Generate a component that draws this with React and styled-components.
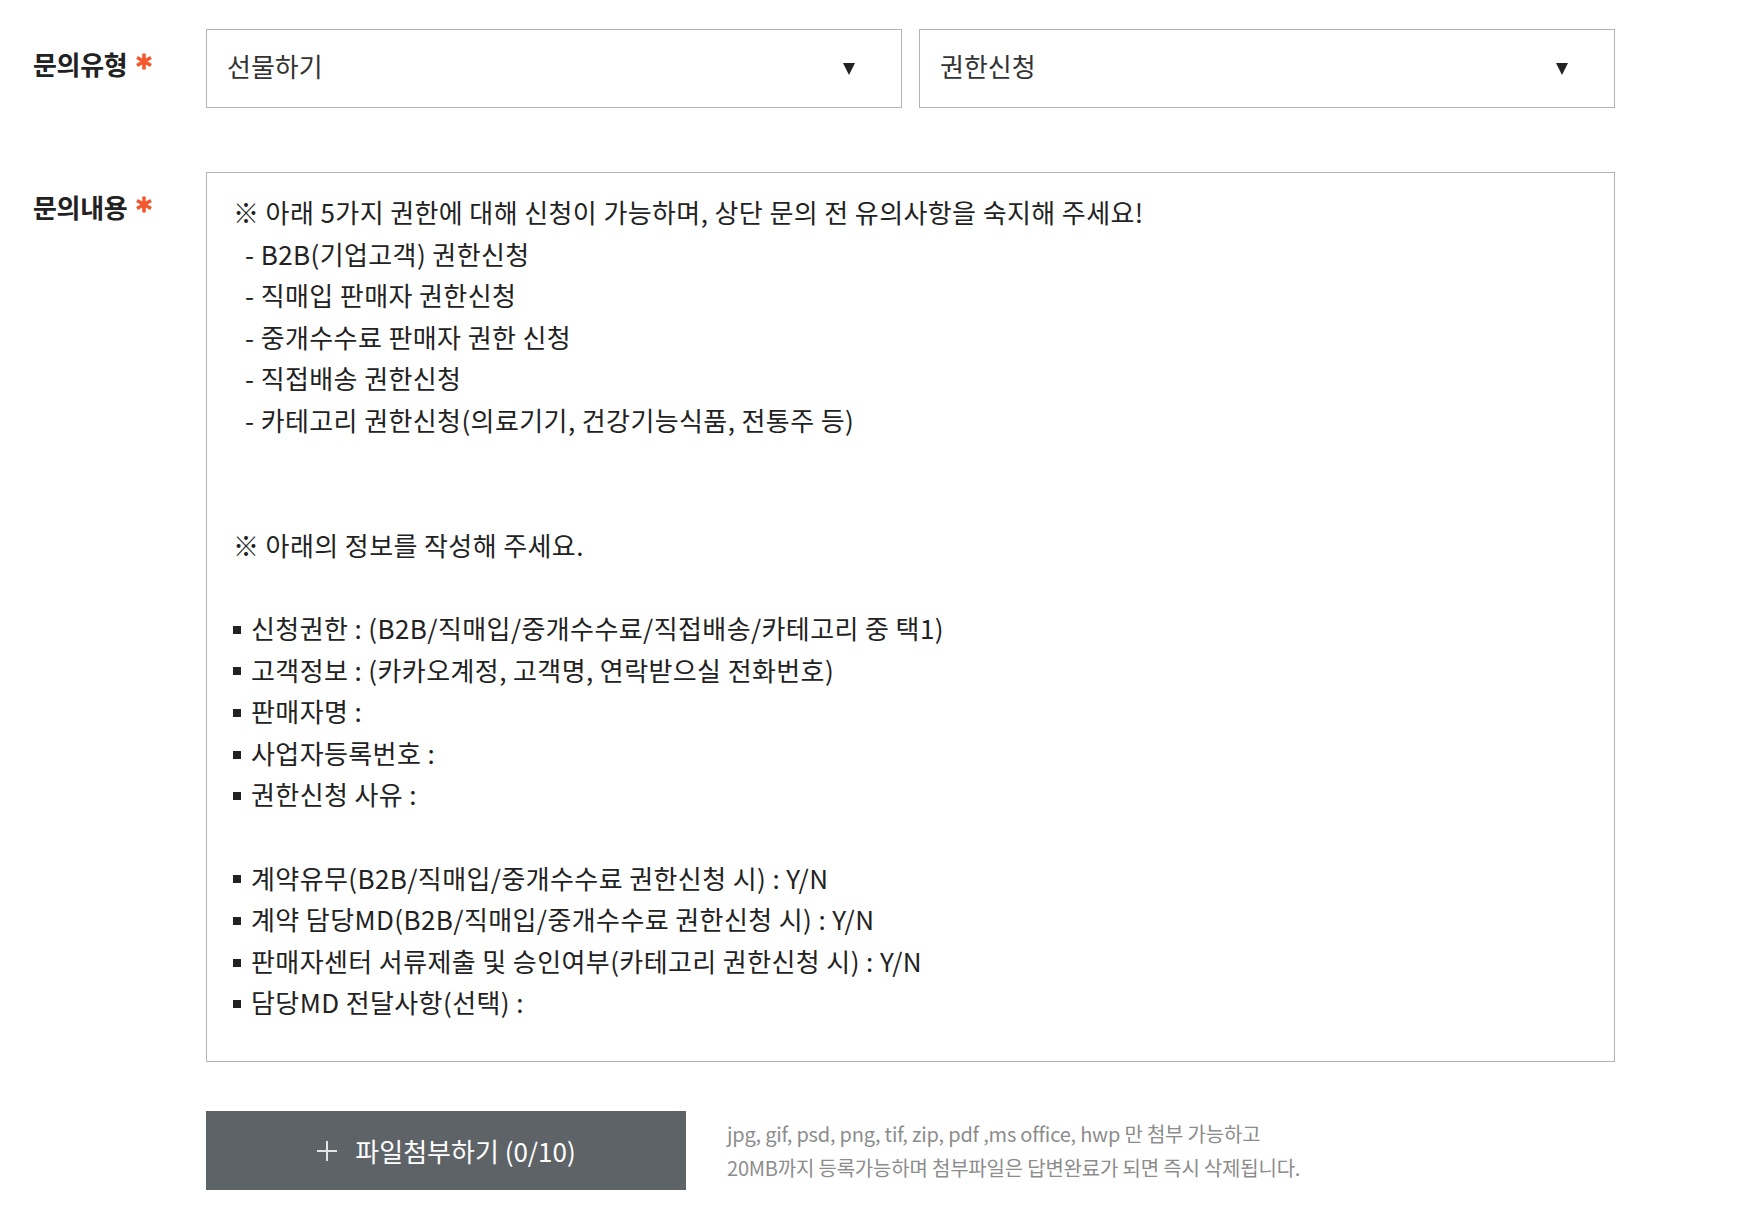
import React from "react";
import styled, { createGlobalStyle } from "styled-components";

const GlobalStyle = createGlobalStyle`
  html, body {
    margin: 0;
    padding: 0;
    background: #fff;
  }
  body {
    font-family: "Noto Sans CJK KR", "Noto Sans", sans-serif;
    color: #222;
  }
`;

const Form = styled.div`
  padding: 29px 0 0 33px;
  display: flex;
  flex-direction: column;
`;

const Row = styled.div`
  display: flex;
  align-items: flex-start;
  margin-bottom: ${(p) => p.gap || 0}px;
`;

const Label = styled.div`
  width: 173px;
  flex-shrink: 0;
  padding-top: 20px;
  display: flex;
  align-items: center;
  font-size: 26px;
  line-height: 30px;
  font-weight: 700;
  letter-spacing: -0.3px;
  color: #222;
`;

const Required = styled.svg`
  margin-left: 9px;
  margin-top: -5px;
`;

const SelectGroup = styled.div`
  display: flex;
  gap: 17px;
`;

const SelectBox = styled.div`
  width: 696px;
  height: 79px;
  box-sizing: border-box;
  border: 1px solid #b4b4b4;
  display: flex;
  align-items: center;
  justify-content: space-between;
  padding: 0 46px 6px 20px;
  font-size: 26px;
  color: #333;
`;

const Arrow = styled.span`
  width: 0;
  height: 0;
  margin-top: 6px;
  border-left: 6px solid transparent;
  border-right: 6px solid transparent;
  border-top: 12px solid #222;
`;

const ContentBox = styled.div`
  width: 1409px;
  height: 890px;
  box-sizing: border-box;
  border: 1px solid #b4b4b4;
  padding: 18px 24px;
  font-size: 26px;
  line-height: 41.6px;
  letter-spacing: 0.4px;
  color: #222;
`;

const Line = styled.div`
  min-height: 41.6px;
  white-space: pre;
  padding-left: ${(p) => (p.indent ? 14 : 2)}px;
`;

const Bullet = styled.span`
  display: inline-block;
  width: 8px;
  height: 8px;
  background: #222;
  margin-right: 10px;
  vertical-align: middle;
  position: relative;
  top: -2px;
`;

const AttachRow = styled.div`
  display: flex;
  align-items: center;
  margin-left: 173px;
  gap: 41px;
`;

const AttachButton = styled.button`
  width: 480px;
  height: 79px;
  border: none;
  background: #5e6367;
  color: #fff;
  display: flex;
  align-items: center;
  justify-content: center;
  gap: 17px;
  font-family: inherit;
  font-size: 26px;
  font-weight: 400;
  cursor: pointer;
`;

const Help = styled.div`
  font-size: 20px;
  line-height: 34px;
  color: #8c8c8c;
  letter-spacing: -0.2px;
`;

const infoLines = [
  { text: "※ 아래 5가지 권한에 대해 신청이 가능하며, 상단 문의 전 유의사항을 숙지해 주세요!" },
  { text: "- B2B(기업고객) 권한신청", indent: true },
  { text: "- 직매입 판매자 권한신청", indent: true },
  { text: "- 중개수수료 판매자 권한 신청", indent: true },
  { text: "- 직접배송 권한신청", indent: true },
  { text: "- 카테고리 권한신청(의료기기, 건강기능식품, 전통주 등)", indent: true },
  { text: "" },
  { text: "" },
  { text: "※ 아래의 정보를 작성해 주세요." },
  { text: "" },
  { text: "신청권한 : (B2B/직매입/중개수수료/직접배송/카테고리 중 택1)", bullet: true },
  { text: "고객정보 : (카카오계정, 고객명, 연락받으실 전화번호)", bullet: true },
  { text: "판매자명 :", bullet: true },
  { text: "사업자등록번호 :", bullet: true },
  { text: "권한신청 사유 :", bullet: true },
  { text: "" },
  { text: "계약유무(B2B/직매입/중개수수료 권한신청 시) : Y/N", bullet: true },
  { text: "계약 담당MD(B2B/직매입/중개수수료 권한신청 시) : Y/N", bullet: true },
  { text: "판매자센터 서류제출 및 승인여부(카테고리 권한신청 시) : Y/N", bullet: true },
  { text: "담당MD 전달사항(선택) :", bullet: true },
];

function Asterisk() {
  return (
    <Required width="16" height="17" viewBox="0 0 16 17">
      <g stroke="#f4582f" strokeWidth="3.6" strokeLinecap="butt">
        <path d="M8 0.5v16" />
        <path d="M1 4.5l14 8" />
        <path d="M1 12.5l14 -8" />
      </g>
    </Required>
  );
}

function PlusIcon() {
  return (
    <svg width="22" height="22" viewBox="0 0 22 22">
      <path d="M11 1v20M1 11h20" stroke="#e2e4e6" strokeWidth="2" />
    </svg>
  );
}

export default function App() {
  return (
    <>
      <GlobalStyle />
      <Form>
        <Row gap={64}>
          <Label>
            문의유형
            <Asterisk />
          </Label>
          <SelectGroup>
            <SelectBox>
              선물하기
              <Arrow />
            </SelectBox>
            <SelectBox>
              권한신청
              <Arrow />
            </SelectBox>
          </SelectGroup>
        </Row>
        <Row gap={49}>
          <Label>
            문의내용
            <Asterisk />
          </Label>
          <ContentBox>
            {infoLines.map((l, i) => (
              <Line key={i} indent={l.indent}>
                {l.bullet && <Bullet />}
                {l.text}
              </Line>
            ))}
          </ContentBox>
        </Row>
        <AttachRow>
          <AttachButton>
            <PlusIcon />
            파일첨부하기 (0/10)
          </AttachButton>
          <Help>
            jpg, gif, psd, png, tif, zip, pdf ,ms office, hwp 만 첨부 가능하고
            <br />
            20MB까지 등록가능하며 첨부파일은 답변완료가 되면 즉시 삭제됩니다.
          </Help>
        </AttachRow>
      </Form>
    </>
  );
}
